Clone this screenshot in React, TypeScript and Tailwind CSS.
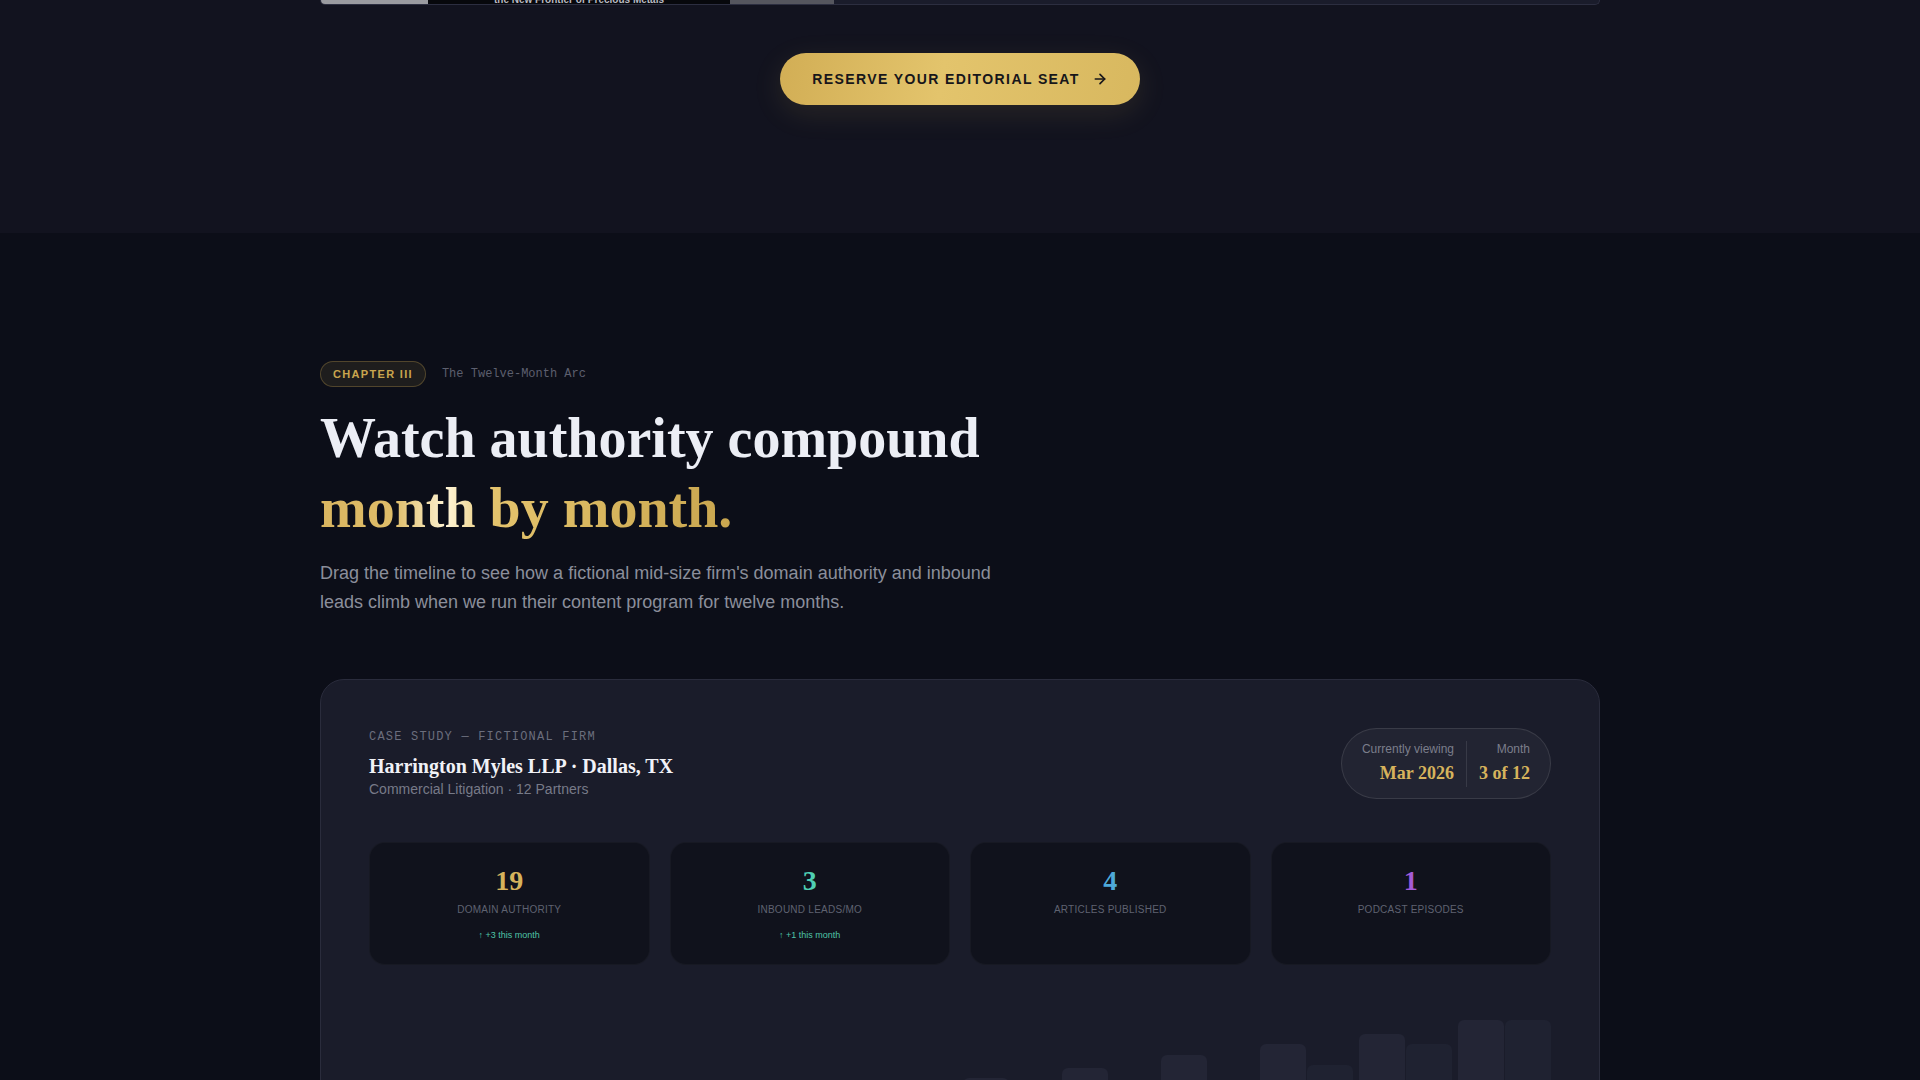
import React from 'react';
import { ArrowRight } from 'lucide-react';

const serif = "font-['Liberation_Serif','Times_New_Roman',serif]";
const sans = "font-['Liberation_Sans',Arial,sans-serif]";
const mono = "font-['Liberation_Mono','Courier_New',monospace]";

const stats = [
  { value: '19', label: 'Domain Authority', delta: '↑ +3 this month', color: 'text-[#d6b35c]' },
  { value: '3', label: 'Inbound Leads/Mo', delta: '↑ +1 this month', color: 'text-[#4fcfb3]' },
  { value: '4', label: 'Articles Published', delta: '', color: 'text-[#4ea9d9]' },
  { value: '1', label: 'Podcast Episodes', delta: '', color: 'text-[#a45bd8]' },
];

// month bars: [authority, leads] heights in px
const bars: [number, number][] = [
  [40, 22], [55, 30], [72, 40], [90, 55], [108, 70], [130, 95],
  [147, 118], [157, 128], [170, 138], [181, 160], [191, 181], [205, 205],
];

const App: React.FC = () => (
  <div className={`min-h-screen bg-[#0c0e18] ${sans}`}>
    {/* Previous section tail */}
    <section className="bg-[#12131f] pb-32">
      <div className="mx-auto max-w-7xl">
        <div className="h-[5px] overflow-hidden rounded-b-3xl border-x border-b border-[#2c2e40] bg-[#1a1c2b] flex">
          <div className="w-[107px] bg-[#9a9ba0]"></div>
          <div className="w-[302px] bg-[#07080c] flex justify-center">
            <span className="-mt-[5px] text-[10px] font-bold text-[#b9bac2] leading-none">the New Frontier of Precious Metals</span>
          </div>
          <div className="w-[104px] bg-[#55565e]"></div>
        </div>
      </div>
      <div className="mt-12 flex justify-center">
        <button className="flex h-[52px] items-center gap-3 rounded-full bg-[linear-gradient(100deg,#d2ae55_0%,#e3c46c_45%,#d8b85f_100%)] px-8 text-[14px] font-bold uppercase tracking-[0.1em] text-[#17161a] shadow-[0_8px_30px_rgba(212,179,90,0.12)]">
          Reserve your editorial seat
          <ArrowRight className="h-4 w-4" strokeWidth={2.5} />
        </button>
      </div>
    </section>

    {/* Chapter III */}
    <section className="pt-32 pb-20">
      <div className="mx-auto max-w-7xl">
        <div className="flex items-center gap-4">
          <span className="flex h-[26px] items-center rounded-full border border-[#c9a54e]/30 bg-[#c9a54e]/10 px-3 text-[11px] font-bold uppercase tracking-[0.12em] text-[#c9a54e]">
            Chapter III
          </span>
          <span className={`${mono} text-[12px] text-[#5c5f6e]`}>The Twelve-Month Arc</span>
        </div>

        <h1 className={`${serif} mt-4 text-[56px] font-bold leading-[1.25] text-[#eceef5]`}>
          Watch authority compound
          <br />
          <span className="bg-[linear-gradient(90deg,#d9b560_0%,#dfbd69_18%,#fff4d4_31%,#e4c36d_42%,#d7b55d_70%,#c9a64f_100%)] bg-clip-text text-transparent">
            month by month.
          </span>
        </h1>

        <p className="mt-4 max-w-[680px] text-[18px] leading-[1.6] text-[#8b8e9b]">
          Drag the timeline to see how a fictional mid-size firm's domain authority and inbound leads climb when we run their content program for twelve months.
        </p>

        {/* Case study card */}
        <div className="mt-[62px] rounded-3xl border border-[#2a2c3c] bg-[#1a1c2a] p-12">
          <div className="flex items-center justify-between">
            <div>
              <div className={`${mono} text-[12px] uppercase tracking-[0.1em] text-[#6b6e7d]`}>Case Study — Fictional Firm</div>
              <div className={`${serif} mt-2 text-[20px] font-bold leading-tight text-[#f1f2f7]`}>Harrington Myles LLP · Dallas, TX</div>
              <div className="text-[14px] text-[#777a88]">Commercial Litigation · 12 Partners</div>
            </div>
            <div className="flex h-[71px] items-center gap-3 rounded-full border border-white/10 bg-white/[0.04] px-5">
              <div className="text-right">
                <div className="text-[12px] text-[#7b7e8b]">Currently viewing</div>
                <div className={`${serif} mt-0.5 text-[18px] font-bold text-[#d6b35c]`}>Mar 2026</div>
              </div>
              <div className="h-[46px] w-px bg-white/10"></div>
              <div className="text-right">
                <div className="text-[12px] text-[#7b7e8b]">Month</div>
                <div className={`${serif} mt-0.5 text-[18px] font-bold text-[#d6b35c]`}>3 of 12</div>
              </div>
            </div>
          </div>

          <div className="mt-[42px] grid grid-cols-4 gap-5">
            {stats.map((s) => (
              <div key={s.label} className="h-[123px] rounded-2xl border border-white/[0.03] bg-[#10121c] px-6 pt-5 text-center">
                <div className={`${serif} text-[28px] font-bold leading-tight ${s.color}`}>{s.value}</div>
                <div className="mt-1 text-[10px] uppercase tracking-wide text-[#5f6271]">{s.label}</div>
                {s.delta && <div className="mt-3 text-[9px] text-[#4fc4a8]">{s.delta}</div>}
              </div>
            ))}
          </div>

          {/* Timeline chart */}
          <div className="mt-10 grid h-[220px] grid-cols-12 items-end gap-1.5">
            {bars.map(([a, b], i) => (
              <div key={i} className="flex h-full items-end gap-px">
                <div className="flex-1 rounded-t-md bg-[#232535]" style={{ height: a }}></div>
                <div className="flex-1 rounded-t-md bg-[#1f2231]" style={{ height: b }}></div>
              </div>
            ))}
          </div>
        </div>
      </div>
    </section>
  </div>
);

export default App;
